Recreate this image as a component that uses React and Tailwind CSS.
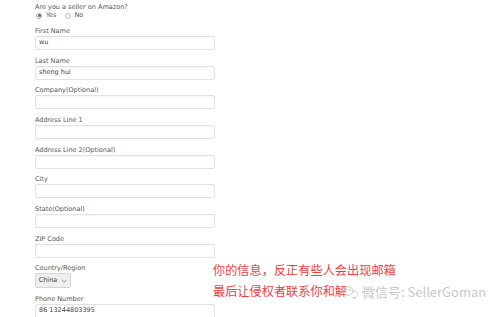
import React from 'react';

const fields = [
  { label: 'First Name', value: 'wu' },
  { label: 'Last Name', value: 'sheng hui' },
  { label: 'Company(Optional)', value: '' },
  { label: 'Address Line 1', value: '' },
  { label: 'Address Line 2(Optional)', value: '' },
  { label: 'City', value: '' },
  { label: 'State(Optional)', value: '' },
  { label: 'ZIP Code', value: '' },
];

function Field({ label, children }) {
  return (
    <div className="flex flex-col mb-[4.67px]">
      <label className="text-[6.5px] leading-[12px] h-[11px] text-[#555]">{label}</label>
      {children}
    </div>
  );
}

function TextBox({ value }) {
  return (
    <div className="w-[180px] h-[14px] border border-[#e2e2e2] rounded-[2px] bg-white flex items-center px-[3px] text-[6.5px] text-[#444] shadow-[inset_0_1px_1px_rgba(0,0,0,0.03)]">
      {value}
    </div>
  );
}

function WechatIcon() {
  return (
    <svg width="16" height="14" viewBox="0 0 16 14" fill="none" stroke="#cccccc" strokeWidth="1">
      <ellipse cx="6" cy="6" rx="5" ry="4.2" />
      <path d="M3 9.5 L2.2 11.5 L4.6 10.2" />
      <circle cx="4.3" cy="5" r="0.6" fill="#cccccc" />
      <circle cx="7.7" cy="5" r="0.6" fill="#cccccc" />
      <path d="M10 6.5 A4 3.4 0 1 1 10.5 12.6 L12.8 13.4 L12.3 11.8" />
    </svg>
  );
}

export default function App() {
  return (
    <div
      className="relative w-[499px] h-[317px] bg-white overflow-hidden"
      style={{ fontFamily: '"DejaVu Sans", Verdana, sans-serif' }}
    >
      <div className="pl-[35px] pt-[2px] flex flex-col">
        <div className="text-[6.5px] leading-[10px] text-[#555]">Are you a seller on Amazon?</div>
        <div className="flex items-center h-[9px] -mt-[1px] text-[6.5px] text-[#555]">
          <span className="w-[6px] h-[6px] rounded-full border border-[#aaa] flex items-center justify-center ml-[1px] mr-[4px]">
            <span className="w-[3px] h-[3px] rounded-full bg-[#666]" />
          </span>
          <span className="mr-[8px]">Yes</span>
          <span className="w-[6px] h-[6px] rounded-full border border-[#c4c4c4] bg-[#f4f4f4] mr-[4px]" />
          <span>No</span>
        </div>
        <div className="h-[5px]" />
        {fields.map((f) => (
          <Field key={f.label} label={f.label}>
            <TextBox value={f.value} />
          </Field>
        ))}
        <Field label="Country/Region">
          <div className="w-[36px] h-[15px] border border-[#d4d4d4] rounded-[2px] bg-[#efefef] flex items-center justify-center gap-[4px] text-[6.5px] text-[#444]">
            <span>China</span>
            <svg width="6" height="4" viewBox="0 0 6 4" fill="none" stroke="#888" strokeWidth="0.9">
              <path d="M0.5 0.7 L3 3.2 L5.5 0.7" />
            </svg>
          </div>
        </Field>
        <Field label="Phone Number">
          <TextBox value="86 13244803395" />
        </Field>
      </div>

      <div
        className="absolute left-[213px] top-[259px] text-[12.2px] leading-[22px] text-[#f03e3e]"
        style={{ fontFamily: '"Noto Sans CJK SC", sans-serif' }}
      >
        <div>你的信息，反正有些人会出现邮箱</div>
        <div className="-mt-[1px]">最后让侵权者联系你和解</div>
      </div>

      <div
        className="absolute left-[342px] top-[282px] flex items-center gap-[4px] text-[13px] text-[#c8c8c8]"
        style={{ fontFamily: '"Noto Sans CJK SC", sans-serif' }}
      >
        <WechatIcon />
        <span>微信号: SellerGoman</span>
      </div>
    </div>
  );
}
